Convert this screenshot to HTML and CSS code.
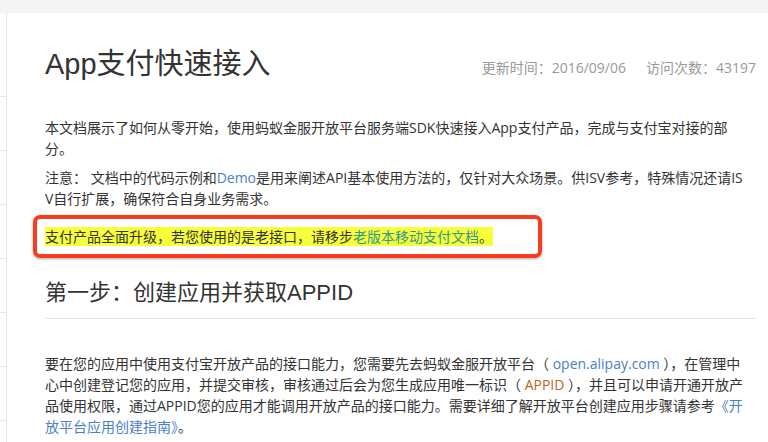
FILE: index.html
```html
<!DOCTYPE html>
<html lang="zh-CN">
<head>
    <meta charset="UTF-8">
    <title>App支付快速接入</title>
    <link rel="stylesheet" href="styles.css">
</head>
<body>
    <div class="topbar"></div>
    <div class="layout">
        <div class="sidebar">
            <div class="side-item side-first"></div>
            <div class="side-item"></div>
            <div class="side-item"></div>
            <div class="side-item"></div>
            <div class="side-item"></div>
            <div class="side-item"></div>
            <div class="side-item"></div>
        </div>

        <div class="content">
            <div class="doc-header">
                <h1>App支付快速接入</h1>
                <div class="meta">
                    <span>更新时间：2016/09/06</span>
                    <span>访问次数：43197</span>
                </div>
            </div>

            <div class="doc-body">
                <p>本文档展示了如何从零开始，使用蚂蚁金服开放平台服务端SDK快速接入App支付产品，完成与支付宝对接的部分。</p>
                <p>注意： 文档中的代码示例和<a href="#">Demo</a>是用来阐述API基本使用方法的，仅针对大众场景。供ISV参考，特殊情况还请ISV自行扩展，确保符合自身业务需求。</p>

                <div class="notice-box">
                    <span class="highlight">支付产品全面升级，若您使用的是老接口，请移步<a href="#" class="old-link">老版本移动支付文档</a>。</span>
                </div>
            </div>

            <h2>第一步：创建应用并获取APPID</h2>

            <div class="doc-body">
                <p class="step-text">要在您的应用中使用支付宝开放产品的接口能力，您需要先去蚂蚁金服开放平台（ <a href="#">open.alipay.com</a> ），在管理中心中创建登记您的应用，并提交审核，审核通过后会为您生成应用唯一标识（ <span class="code">APPID</span> ），并且可以申请开通开放产品使用权限，通过APPID您的应用才能调用开放产品的接口能力。需要详细了解开放平台创建应用步骤请参考<a href="#">《开放平台应用创建指南》</a>。</p>
            </div>
        </div>
    </div>
</body>
</html>
```

FILE: styles.css
```css
body {
    margin: 0;
    background: #fff;
    color: #333;
    font-family: "Open Sans", "Noto Sans CJK SC", sans-serif;
    font-size: 14px;
    overflow: hidden;
}
a {
    color: #4a80c8;
    text-decoration: none;
}
.topbar {
    height: 13px;
    background: #f3f4f6;
}
.layout {
    display: flex;
}
.sidebar {
    width: 6px;
    flex-shrink: 0;
    border-right: 1px solid #e8e8e8;
    min-height: 440px;
}
.side-item {
    height: 53px;
    border-bottom: 1px solid #e6e6e6;
}
.side-first {
    height: 83px;
}
.content {
    width: 711px;
    padding-left: 38px;
}
.doc-body {
    width: 705px;
}
.doc-header {
    display: flex;
    justify-content: space-between;
    align-items: flex-end;
    padding-top: 31px;
    margin-bottom: 33px;
}
h1 {
    margin: 0;
    font-family: "Liberation Sans", "Noto Sans CJK SC", sans-serif;
    font-size: 29px;
    font-weight: normal;
    line-height: 40px;
    color: #333;
}
.meta {
    display: flex;
    gap: 20px;
    color: #999;
    font-size: 14px;
    padding-bottom: 7px;
}
p {
    margin: 0 0 8px;
    line-height: 21px;
    word-break: break-all;
}
.notice-box {
    width: 485px;
    margin: -2px 0 0 -12px;
    padding: 7px 8px 6px;
    border: 4px solid #f23d1e;
    border-radius: 7px;
    box-shadow: 0 1px 3px rgba(0, 0, 0, 0.35);
    line-height: 22px;
}
.highlight {
    background: #f6ff3a;
    color: #333;
}
.old-link {
    color: #34988a;
}
h2 {
    margin: 20px 0 0;
    padding-bottom: 10px;
    border-bottom: 1px solid #e5e5e5;
    font-family: "Liberation Sans", "Noto Sans CJK SC", sans-serif;
    font-size: 22px;
    font-weight: normal;
    line-height: 30px;
    color: #333;
}
.step-text {
    margin-top: 34px;
    line-height: 21px;
}
.code {
    color: #c0621c;
}
```
